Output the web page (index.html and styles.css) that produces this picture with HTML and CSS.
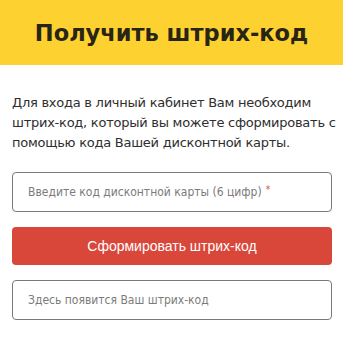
FILE: index.html
```html
<!DOCTYPE html>
<html lang="ru">
<head>
  <meta charset="UTF-8" />
  <meta name="viewport" content="width=device-width, initial-scale=1.0" />
  <title>Получить штрих-код</title>
  <link rel="stylesheet" href="styles.css">
</head>
<body>

<!-- Header -->
<div class="title-bar">
  <h1>Получить штрих-код</h1>
</div>

<div class="content">
  <p class="intro">Для входа в личный кабинет Вам необходим штрих-код, который вы можете сформировать с помощью кода Вашей дисконтной карты.</p>

  <!-- Card code input -->
  <div class="field">
    <input type="text" id="cardCode" maxlength="6" />
    <label for="cardCode" class="field-hint">Введите код дисконтной карты (6 цифр) <span class="req">*</span></label>
  </div>

  <button type="button" id="makeBarcode" class="main-btn">Сформировать штрих-код</button>

  <!-- Result -->
  <div class="result-box" id="barcodeResult">Здесь появится Ваш штрих-код</div>
</div>

</body>
</html>
```

FILE: styles.css
```css
/* General Styling */
body {
  margin: 0;
  background-color: #ffffff;
  font-family: 'DejaVu Sans', Tahoma, sans-serif;
  color: #2b2b2b;
}

/* Header */
.title-bar {
  height: 65px;
  background-color: #fdd12f;
  display: flex;
  align-items: center;
  justify-content: center;
}

.title-bar h1 {
  margin: 0;
  font-size: 22.5px;
  font-weight: 700;
  color: #282416;
}

/* Content */
.content {
  padding: 28px 11px 0 12px;
}

.intro {
  margin: 0 -6px 19px 0;
  font-size: 13px;
  line-height: 20px;
  letter-spacing: -0.25px;
  color: #2e2e2e;
}

/* Inputs */
.field {
  position: relative;
}

.field input,
.result-box {
  display: block;
  width: 100%;
  height: 40px;
  box-sizing: border-box;
  border: 1px solid #7a7a7a;
  border-radius: 4px;
  background: #fff;
  padding: 0 15px;
  font-family: 'DejaVu Sans Condensed', 'DejaVu Sans', sans-serif;
  font-size: 12px;
  color: #333;
}

.field input:focus {
  outline: none;
  border-color: #555;
}

.field-hint {
  position: absolute;
  left: 16px;
  top: 0;
  height: 40px;
  display: flex;
  align-items: center;
  font-family: 'DejaVu Sans Condensed', 'DejaVu Sans', sans-serif;
  font-size: 12px;
  color: #7b7b7b;
  pointer-events: none;
}

.req {
  color: #d9473b;
  font-size: 10px;
  margin-left: 4px;
  align-self: flex-start;
  margin-top: 12px;
}

/* Button */
.main-btn {
  display: block;
  width: 100%;
  height: 38px;
  margin: 15px 0;
  border: none;
  border-radius: 4px;
  background-color: #d9473b;
  color: #ffffff;
  font-family: 'Liberation Sans', Arial, sans-serif;
  font-size: 14px;
  cursor: pointer;
}

.main-btn:hover {
  background-color: #c93d32;
}

/* Result */
.result-box {
  display: flex;
  align-items: center;
  color: #7b7b7b;
}
```
